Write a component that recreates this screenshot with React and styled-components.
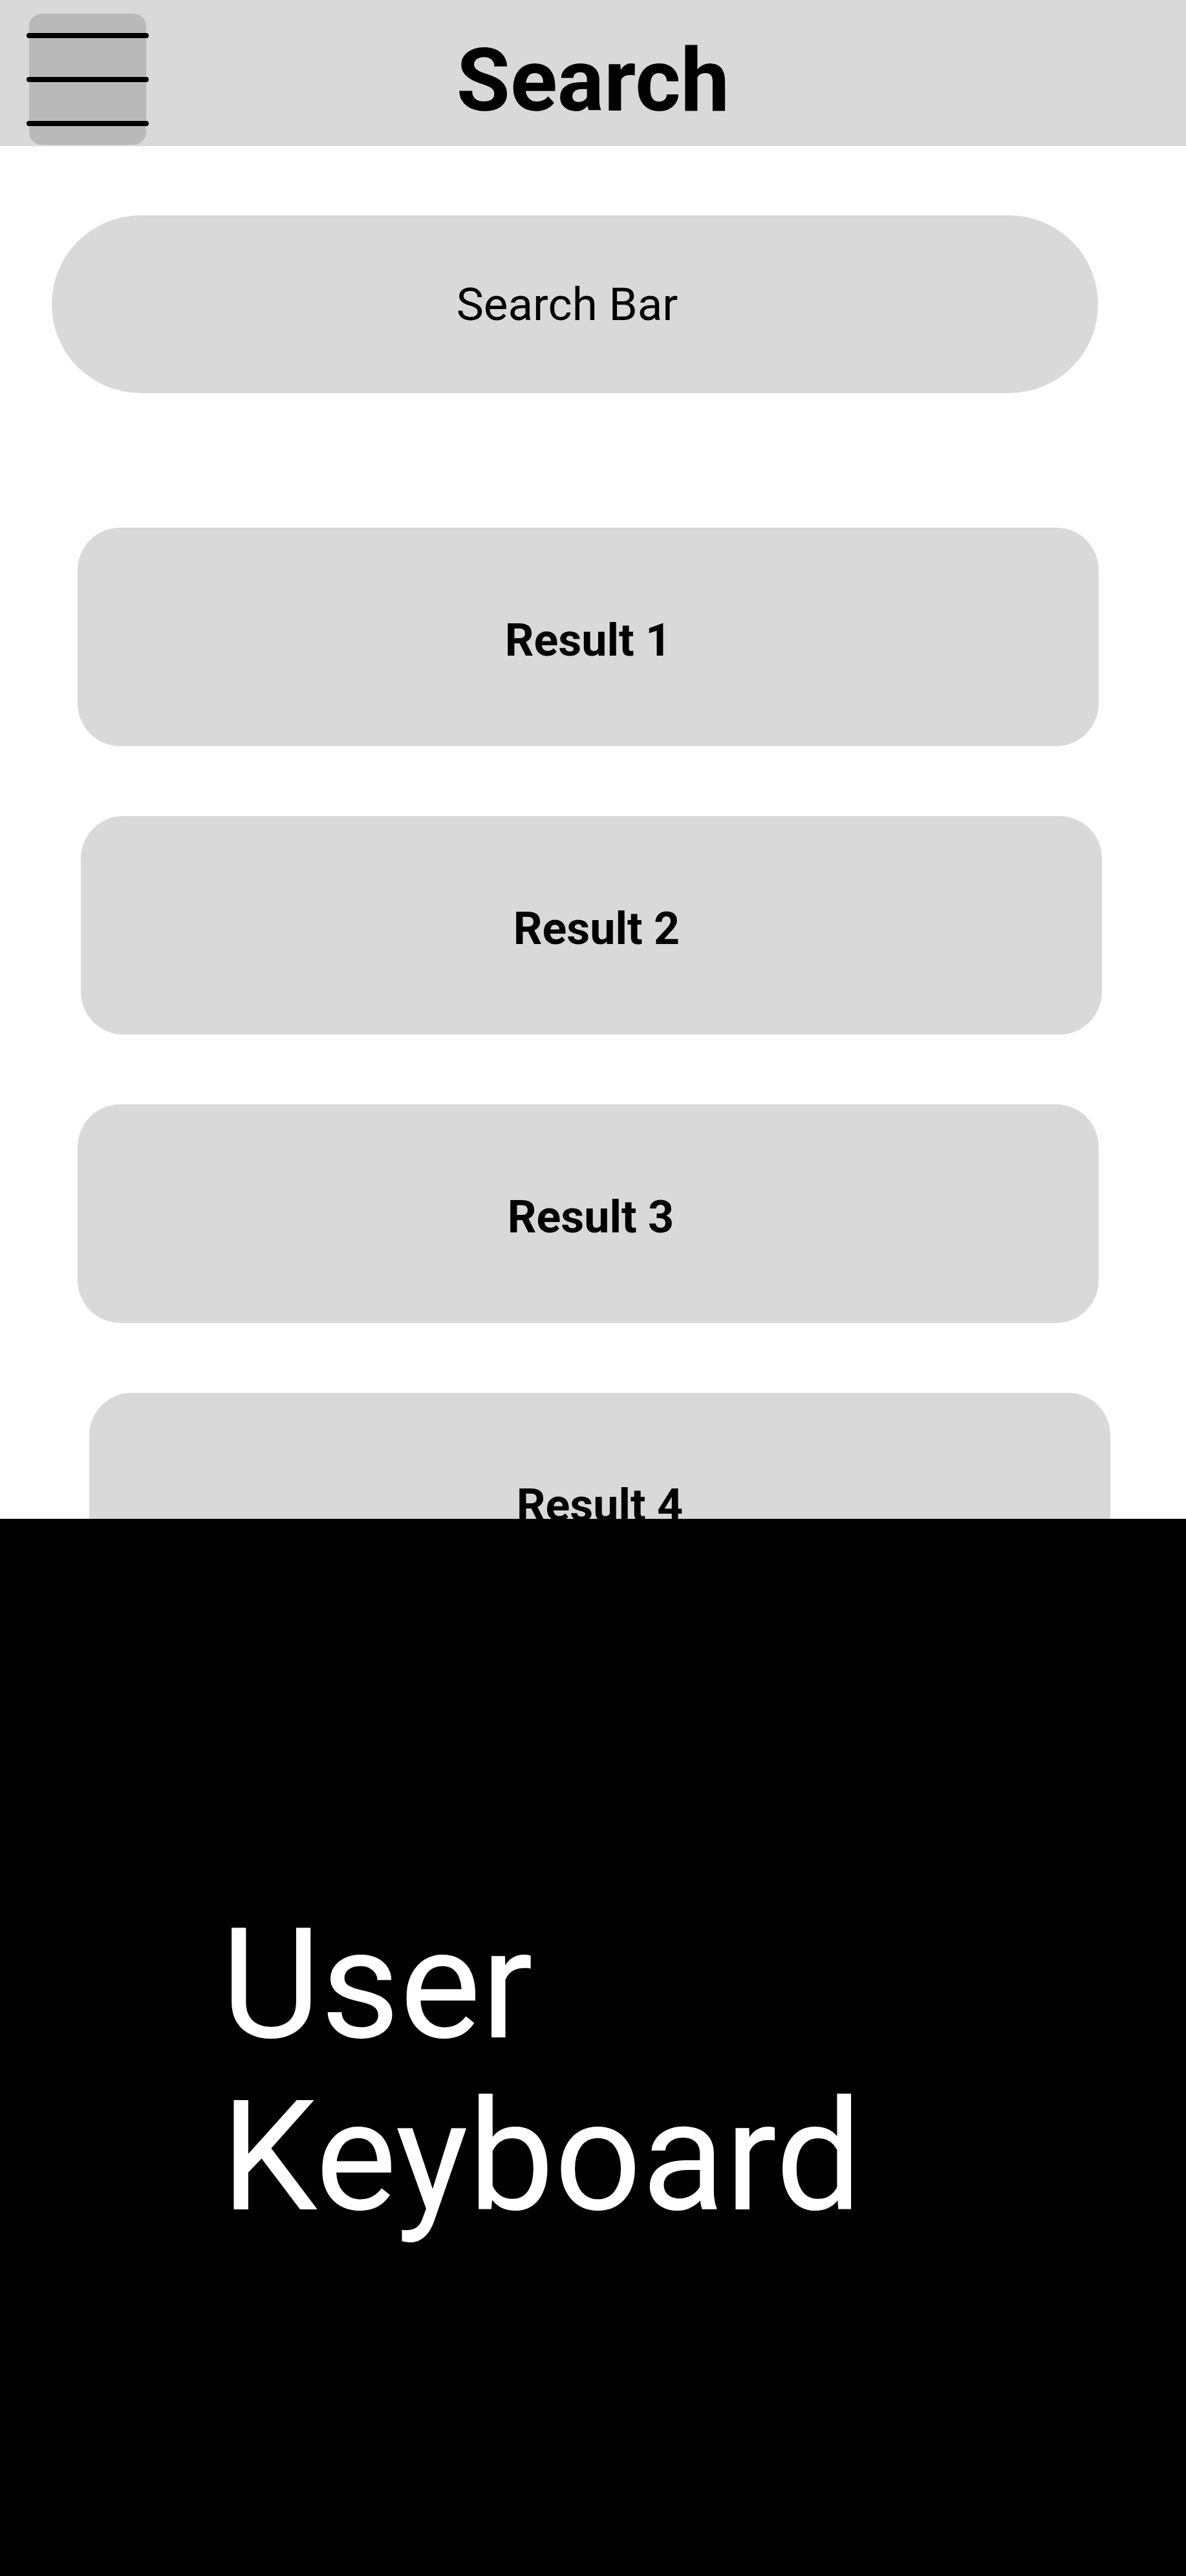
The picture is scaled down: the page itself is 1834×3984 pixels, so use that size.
import React from 'react';
import styled, { createGlobalStyle } from 'styled-components';

const GlobalStyle = createGlobalStyle`
  * {
    box-sizing: border-box;
  }

  body {
    margin: 0;
    background: #ffffff;
    font-family: Roboto, "Liberation Sans", sans-serif;
    color: #000000;
  }
`

const Screen = styled.div`
  width: 1834px;
  height: 3984px;
  overflow: hidden;
  display: flex;
  flex-direction: column;
  background: #ffffff;
`

const Header = styled.header`
  height: 226px;
  flex-shrink: 0;
  background: #d9d9d9;
  display: grid;
  grid-template-columns: 1fr auto 1fr;
  align-items: start;
`

const MenuButton = styled.button`
  margin: 21px 0 0 45px;
  width: 181px;
  height: 203px;
  border: none;
  border-radius: 20px;
  background: #b9b9b9;
  padding: 30px 0 0;
  display: flex;
  flex-direction: column;
  gap: 60px;
  justify-self: start;
`

const MenuLine = styled.span`
  display: block;
  height: 8px;
  margin: 0 -4px;
  border-radius: 4px;
  background: #000000;
`

const Title = styled.h1`
  margin: 0;
  padding-top: 58px;
  font-size: 135px;
  font-weight: 700;
  line-height: 135px;
`

const Content = styled.main`
  height: 2123px;
  flex-shrink: 0;
  overflow: hidden;
  padding-top: 107px;
`

const SearchBar = styled.div`
  margin-left: 80px;
  width: 1618px;
  height: 275px;
  border-radius: 138px;
  background: #d9d9d9;
  display: flex;
  align-items: center;
  justify-content: center;
  padding-right: 24px;
  font-size: 71px;
  font-weight: 400;
`

const ResultList = styled.div`
  margin-top: 208px;
  display: flex;
  flex-direction: column;
  gap: 108px;
`

const ResultCard = styled.div`
  margin-left: ${({ $offset }) => $offset}px;
  width: 1579px;
  height: 338px;
  flex-shrink: 0;
  border-radius: 66px;
  background: #d9d9d9;
  display: flex;
  align-items: center;
  justify-content: center;
  padding-top: 10px;
  padding-left: ${({ $shift }) => $shift}px;
  font-size: 70px;
  font-weight: 700;
`

const Keyboard = styled.section`
  flex: 1;
  background: #000000;
  padding: 588px 0 0 342px;
`

const KeyboardLabel = styled.div`
  width: 1100px;
  color: #ffffff;
  font-size: 237px;
  font-weight: 400;
  line-height: 266px;
`


const results = [
  { label: 'Result 1', offset: 120, shift: 0 },
  { label: 'Result 2', offset: 125, shift: 16 },
  { label: 'Result 3', offset: 120, shift: 8 },
  { label: 'Result 4', offset: 138, shift: 0 },
];

const App = () => (
  <Screen>
    <GlobalStyle />
    <Header>
      <MenuButton aria-label="Menu">
        <MenuLine />
        <MenuLine />
        <MenuLine />
      </MenuButton>
      <Title>Search</Title>
    </Header>
    <Content>
      <SearchBar>Search Bar</SearchBar>
      <ResultList>
        {results.map((r) => (
          <ResultCard key={r.label} $offset={r.offset} $shift={r.shift}>
            {r.label}
          </ResultCard>
        ))}
      </ResultList>
    </Content>
    <Keyboard>
      <KeyboardLabel>User Keyboard</KeyboardLabel>
    </Keyboard>
  </Screen>
)

export default App;
